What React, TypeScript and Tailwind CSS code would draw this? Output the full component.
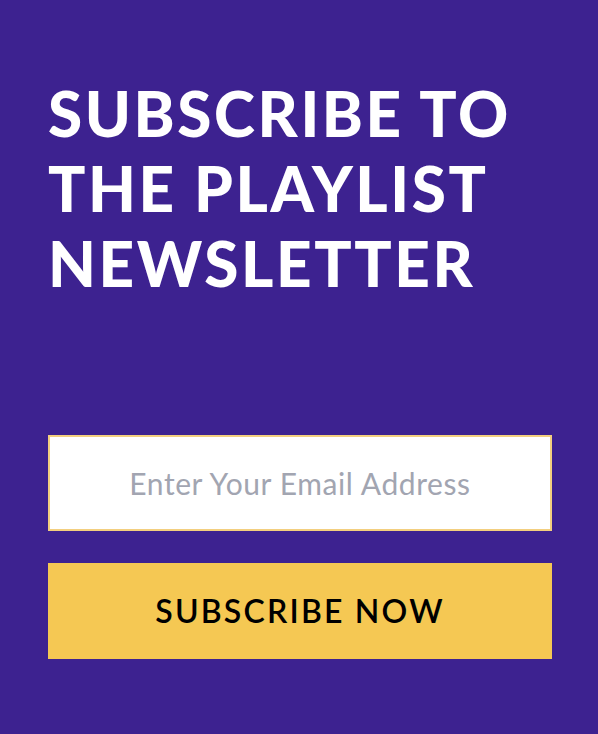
export default function App() {
  return (
    <div className="min-h-[734px] w-full bg-[#3d2290] pl-12 pt-[76px] font-['Lato',sans-serif]">
      {/* heading */}
      <h1 className="text-[62px] font-black uppercase leading-[75px] tracking-[2.6px] text-white">
        Subscribe to
        <br />
        the playlist
        <br />
        newsletter
      </h1>

      {/* form */}
      <div className="mt-[134px] flex w-[504px] flex-col gap-[32px]">
        <input
          type="email"
          placeholder="Enter Your Email Address"
          className="h-[96px] w-full border-2 border-[#f3cf7f] bg-white text-center text-[30px] tracking-[0.6px] text-gray-700 outline-none placeholder:text-[#a2a5b1]"
        />
        <button className="h-[96px] w-full bg-[#f5c853] text-[32px] font-semibold uppercase tracking-[2.2px] text-black">
          Subscribe now
        </button>
      </div>
    </div>
  );
}
